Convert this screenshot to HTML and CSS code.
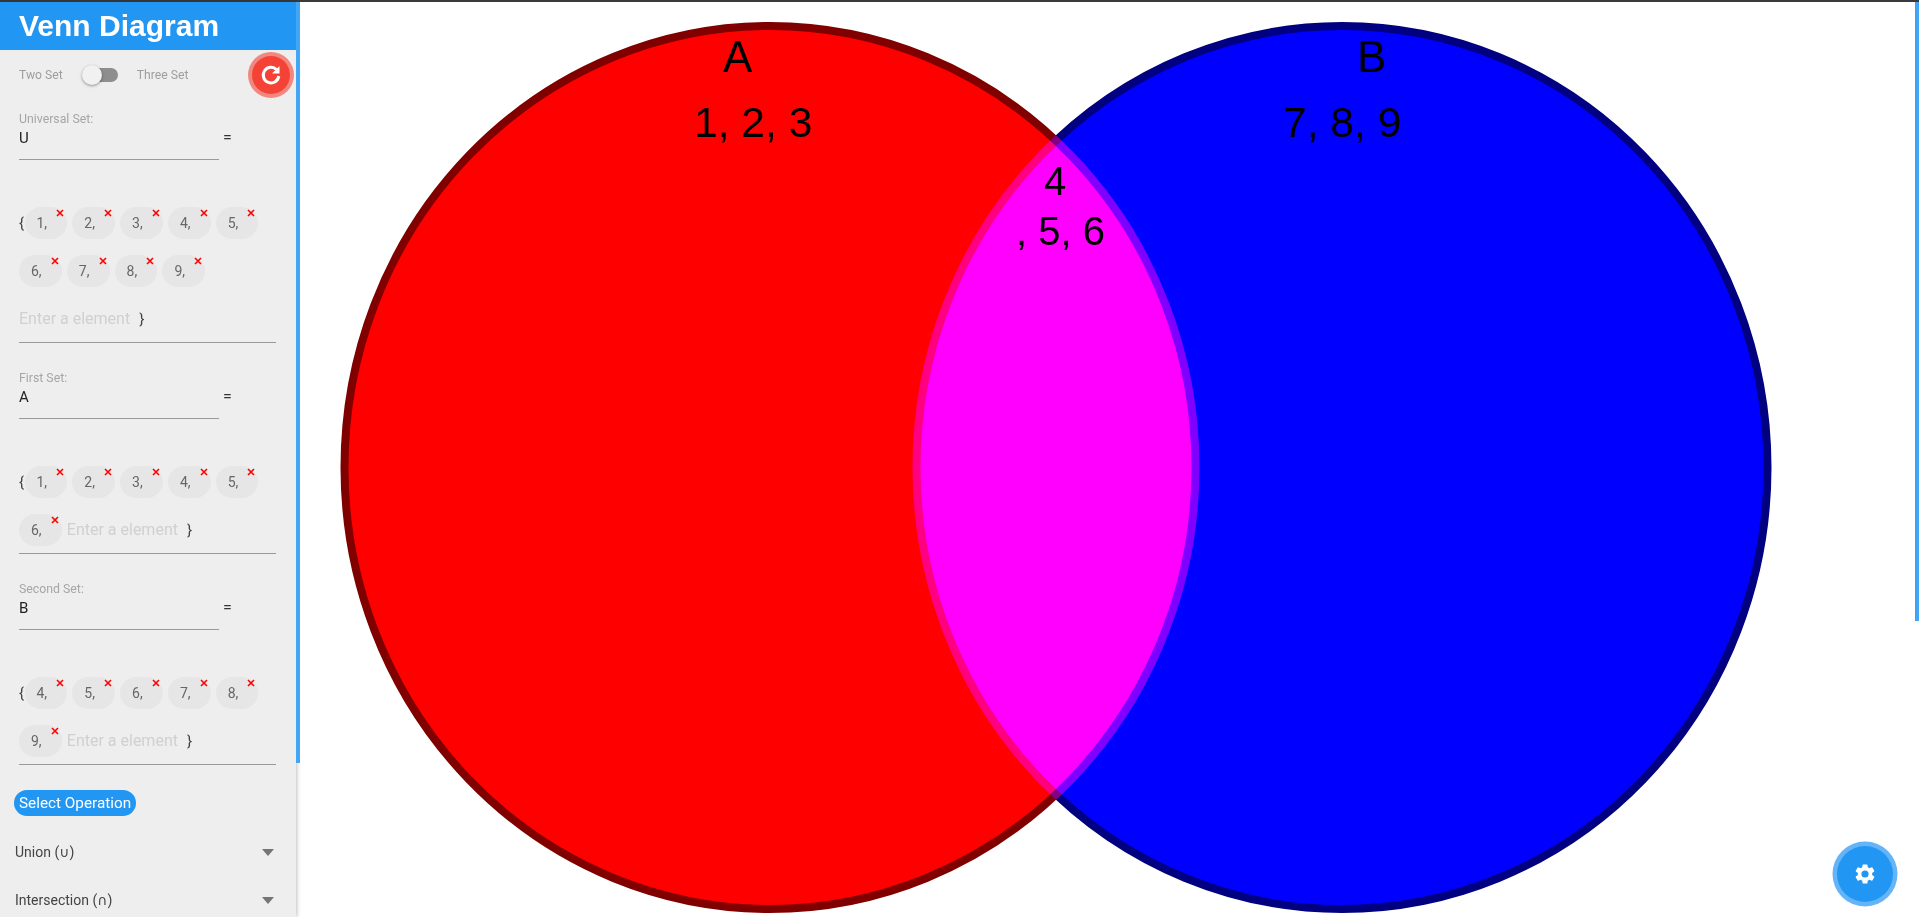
FILE: index.html
```html
<!DOCTYPE html>
<html lang="en">
<head>
<meta charset="UTF-8">
<meta name="viewport" content="width=device-width, initial-scale=1.0">
<title>Venn Diagram</title>
<link rel="stylesheet" href="styles.css">
</head>
<body>

<div class="top-line"></div>

<div class="container">
    <div class="sidebar">
        <h1 class="title">Venn Diagram</h1>

        <div class="switch-row">
            <span class="switch-label">Two Set</span>
            <span class="switch"><span class="switch-thumb"></span></span>
            <span class="switch-label">Three Set</span>
            <button class="reset-btn" type="button">
                <svg viewBox="0 0 24 24" width="24" height="24"><path fill="none" stroke="#fff" stroke-width="3" d="M17.5 6.5A7.8 7.8 0 1 0 19.8 13"/><path fill="#fff" d="M20.5 3v7.5H13z"/></svg>
            </button>
        </div>

        <div class="set">
            <div class="set-label">Universal Set:</div>
            <div class="name-row"><div class="name-input">U</div><span class="equals">=</span></div>
            <div class="elements">
                <span class="brace">{</span>
                <span class="chip">1,<svg class="chip-x" viewBox="0 0 8 8"><path d="M1 1l6 6M7 1l-6 6"/></svg></span>
                <span class="chip">2,<svg class="chip-x" viewBox="0 0 8 8"><path d="M1 1l6 6M7 1l-6 6"/></svg></span>
                <span class="chip">3,<svg class="chip-x" viewBox="0 0 8 8"><path d="M1 1l6 6M7 1l-6 6"/></svg></span>
                <span class="chip">4,<svg class="chip-x" viewBox="0 0 8 8"><path d="M1 1l6 6M7 1l-6 6"/></svg></span>
                <span class="chip">5,<svg class="chip-x" viewBox="0 0 8 8"><path d="M1 1l6 6M7 1l-6 6"/></svg></span>
                <span class="chip">6,<svg class="chip-x" viewBox="0 0 8 8"><path d="M1 1l6 6M7 1l-6 6"/></svg></span>
                <span class="chip">7,<svg class="chip-x" viewBox="0 0 8 8"><path d="M1 1l6 6M7 1l-6 6"/></svg></span>
                <span class="chip">8,<svg class="chip-x" viewBox="0 0 8 8"><path d="M1 1l6 6M7 1l-6 6"/></svg></span>
                <span class="chip">9,<svg class="chip-x" viewBox="0 0 8 8"><path d="M1 1l6 6M7 1l-6 6"/></svg></span>
                <span class="placeholder">Enter a element</span>
                <span class="brace brace-end">}</span>
            </div>
        </div>

        <div class="set">
            <div class="set-label">First Set:</div>
            <div class="name-row"><div class="name-input">A</div><span class="equals">=</span></div>
            <div class="elements">
                <span class="brace">{</span>
                <span class="chip">1,<svg class="chip-x" viewBox="0 0 8 8"><path d="M1 1l6 6M7 1l-6 6"/></svg></span>
                <span class="chip">2,<svg class="chip-x" viewBox="0 0 8 8"><path d="M1 1l6 6M7 1l-6 6"/></svg></span>
                <span class="chip">3,<svg class="chip-x" viewBox="0 0 8 8"><path d="M1 1l6 6M7 1l-6 6"/></svg></span>
                <span class="chip">4,<svg class="chip-x" viewBox="0 0 8 8"><path d="M1 1l6 6M7 1l-6 6"/></svg></span>
                <span class="chip">5,<svg class="chip-x" viewBox="0 0 8 8"><path d="M1 1l6 6M7 1l-6 6"/></svg></span>
                <span class="chip">6,<svg class="chip-x" viewBox="0 0 8 8"><path d="M1 1l6 6M7 1l-6 6"/></svg></span>
                <span class="placeholder">Enter a element</span>
                <span class="brace brace-end">}</span>
            </div>
        </div>

        <div class="set">
            <div class="set-label">Second Set:</div>
            <div class="name-row"><div class="name-input">B</div><span class="equals">=</span></div>
            <div class="elements">
                <span class="brace">{</span>
                <span class="chip">4,<svg class="chip-x" viewBox="0 0 8 8"><path d="M1 1l6 6M7 1l-6 6"/></svg></span>
                <span class="chip">5,<svg class="chip-x" viewBox="0 0 8 8"><path d="M1 1l6 6M7 1l-6 6"/></svg></span>
                <span class="chip">6,<svg class="chip-x" viewBox="0 0 8 8"><path d="M1 1l6 6M7 1l-6 6"/></svg></span>
                <span class="chip">7,<svg class="chip-x" viewBox="0 0 8 8"><path d="M1 1l6 6M7 1l-6 6"/></svg></span>
                <span class="chip">8,<svg class="chip-x" viewBox="0 0 8 8"><path d="M1 1l6 6M7 1l-6 6"/></svg></span>
                <span class="chip">9,<svg class="chip-x" viewBox="0 0 8 8"><path d="M1 1l6 6M7 1l-6 6"/></svg></span>
                <span class="placeholder">Enter a element</span>
                <span class="brace brace-end">}</span>
            </div>
        </div>

        <div class="operation-title">Select Operation</div>
        <div class="operation"><span>Union (<span class="op-symbol">∪</span>)</span><span class="caret"></span></div>
        <div class="operation"><span>Intersection (<span class="op-symbol">∩</span>)</span><span class="caret"></span></div>
    </div>

    <div class="canvas">
        <div class="sidebar-scroll"></div>
        <svg class="venn" viewBox="0 0 1623 915" width="1623" height="915">
            <g class="circles">
                <ellipse class="circle-a" cx="474" cy="465.5" rx="425.5" ry="441.5"/>
                <ellipse class="circle-b" cx="1046" cy="465.5" rx="425.5" ry="441.5"/>
            </g>
            <text class="set-name" x="427" y="70">A</text>
            <text class="set-name" x="1061" y="70">B</text>
            <text class="set-text" x="398" y="135">1, 2, 3</text>
            <text class="set-text" x="987" y="135">7, 8, 9</text>
            <text class="overlap-text" x="748" y="193">4</text>
            <text class="overlap-text" x="720" y="243">, 5, 6</text>
        </svg>
        <div class="page-scroll"></div>
        <button class="settings-btn" type="button">
            <svg viewBox="0 0 24 24" width="24" height="24"><path fill="#fff" d="M19.14 12.94c.04-.3.06-.61.06-.94s-.02-.64-.07-.94l2.03-1.58a.49.49 0 0 0 .12-.61l-1.92-3.32a.49.49 0 0 0-.59-.22l-2.39.96a7.03 7.03 0 0 0-1.62-.94l-.36-2.54a.48.48 0 0 0-.48-.41h-3.84a.47.47 0 0 0-.47.41l-.36 2.54c-.59.24-1.13.57-1.62.94l-2.39-.96a.48.48 0 0 0-.59.22L2.74 8.87a.47.47 0 0 0 .12.61l2.03 1.58c-.05.3-.09.63-.09.94s.02.64.07.94l-2.03 1.58a.49.49 0 0 0-.12.61l1.92 3.32c.12.22.37.29.59.22l2.39-.96c.5.38 1.03.7 1.62.94l.36 2.54c.05.24.24.41.48.41h3.84c.24 0 .44-.17.47-.41l.36-2.54c.59-.24 1.13-.56 1.62-.94l2.39.96c.22.08.47 0 .59-.22l1.92-3.32a.47.47 0 0 0-.12-.61l-2.01-1.58zM12 15.6A3.6 3.6 0 1 1 12 8.4a3.6 3.6 0 0 1 0 7.2z"/></svg>
        </button>
    </div>
</div>

</body>
</html>
```

FILE: styles.css
```css
html, body {
    margin: 0;
    padding: 0;
    height: 100%;
    overflow: hidden;
    background-color: #fff;
    font-family: Roboto, Arial, sans-serif;
}

.top-line {
    height: 2px;
    background-color: #3a3a3a;
}

.container {
    display: flex;
    height: 915px;
}

/* sidebar */
.sidebar {
    flex: none;
    width: 296px;
    height: 915px;
    overflow: hidden;
    background-color: #eee;
    box-shadow: 1px 0 4px rgba(0, 0, 0, 0.25);
}

.title {
    height: 48px;
    margin: 0;
    padding-left: 19px;
    background-color: #2196f3;
    color: #fff;
    font-family: "Liberation Sans", Arial, sans-serif;
    font-size: 30px;
    font-weight: bold;
    line-height: 48px;
}

.switch-row {
    display: flex;
    align-items: center;
    height: 50px;
    padding-left: 19px;
}

.switch-label {
    color: #9e9e9e;
    font-size: 12.2px;
}

.switch {
    position: relative;
    width: 34px;
    height: 14px;
    margin: 0 19px 0 21px;
    border-radius: 7px;
    background-color: #8e8e8e;
}

.switch-thumb {
    position: absolute;
    top: -3px;
    left: -2px;
    width: 20px;
    height: 20px;
    border-radius: 50%;
    background-color: #f1f1f1;
    box-shadow: 0 1px 3px rgba(0, 0, 0, 0.4);
}

.reset-btn {
    display: flex;
    justify-content: center;
    align-items: center;
    width: 38px;
    height: 38px;
    margin-left: auto;
    margin-right: 6px;
    padding: 0;
    border: none;
    border-radius: 50%;
    background-color: #f44336;
    box-shadow: 0 0 0 4px rgba(244, 67, 54, 0.6);
}

/* set fields */
.set {
    padding: 12px 20px 28px 19px;
}

.set + .set {
    padding-top: 0;
}

.set-label {
    height: 14px;
    color: #a6a6a6;
    font-size: 12.3px;
    line-height: 14px;
}

.name-row {
    display: flex;
}

.name-input {
    box-sizing: border-box;
    width: 200px;
    height: 34px;
    border-bottom: 1px solid #999;
    color: #222;
    font-size: 15px;
    line-height: 24px;
}

.equals {
    margin-left: 4px;
    color: #333;
    font-size: 16px;
    line-height: 24px;
}

.elements {
    display: flex;
    flex-wrap: wrap;
    align-items: center;
    row-gap: 1px;
    margin-top: 39px;
    border-bottom: 1px solid #999;
}

.brace {
    width: 5.5px;
    color: #444;
    font-size: 15px;
}

.brace-end {
    margin-left: 9px;
}

.chip {
    position: relative;
    box-sizing: border-box;
    width: 42.8px;
    height: 32px;
    margin: 8px 5px 7px 0;
    padding-left: 12px;
    border-radius: 16px;
    background-color: #e6e6e6;
    color: #666;
    font-size: 14px;
    line-height: 32px;
}

.chip-x {
    position: absolute;
    top: 2px;
    right: 3px;
    width: 8px;
    height: 8px;
    fill: none;
    stroke: #f00;
    stroke-width: 1.6;
}

.placeholder {
    color: #d0d0d0;
    font-size: 16px;
    line-height: 47px;
}

/* operations */
.operation-title {
    width: fit-content;
    margin: -3px 0 0 14px;
    padding: 0 5px;
    border-radius: 13px;
    background-color: #2196f3;
    color: #fff;
    font-size: 15.3px;
    line-height: 26px;
}

.operation {
    display: flex;
    justify-content: space-between;
    align-items: center;
    height: 48px;
    padding: 0 22px 0 15px;
    color: #444;
    font-size: 14px;
}

.operation-title + .operation {
    margin-top: 12px;
}

.op-symbol {
    font-family: "DejaVu Sans", sans-serif;
    font-size: 14px;
}

.caret {
    width: 0;
    height: 0;
    border-top: 7px solid #757575;
    border-left: 6px solid transparent;
    border-right: 6px solid transparent;
}

/* diagram */
.canvas {
    position: relative;
    flex: 1;
    height: 915px;
}

.sidebar-scroll {
    position: absolute;
    top: 0;
    left: 0;
    width: 4px;
    height: 761px;
    background-color: #42a5f5;
}

.venn {
    display: block;
}

.circles {
    isolation: isolate;
}

.circle-a, .circle-b {
    stroke-width: 8;
    mix-blend-mode: screen;
}

.circle-a {
    fill: #f00;
    stroke: #800000;
}

.circle-b {
    fill: #00f;
    stroke: #000080;
}

.set-name, .set-text, .overlap-text {
    fill: #000;
    font-family: "Liberation Sans", Arial, sans-serif;
}

.set-name {
    font-size: 44px;
}

.set-text {
    font-size: 42.6px;
}

.overlap-text {
    font-size: 40px;
}

.page-scroll {
    position: absolute;
    top: 0;
    right: 0;
    width: 3px;
    height: 619px;
    border-left: 1px solid #8a8a8a;
    background-color: #42a5f5;
}

.settings-btn {
    position: absolute;
    right: 26px;
    bottom: 15px;
    display: flex;
    justify-content: center;
    align-items: center;
    width: 56px;
    height: 56px;
    padding: 0;
    border: none;
    border-radius: 50%;
    background-color: #2196f3;
    box-shadow: 0 0 0 4.5px rgba(33, 150, 243, 0.7);
}
```
